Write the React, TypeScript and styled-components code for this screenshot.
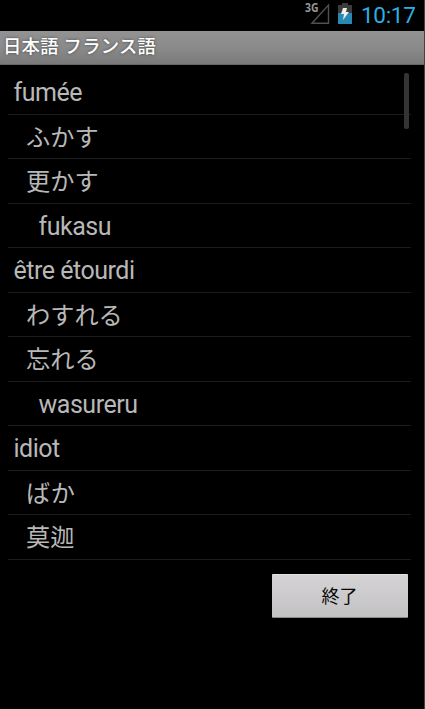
import React from "react";
import styled, { createGlobalStyle } from "styled-components";

const GlobalStyle = createGlobalStyle`
  * { box-sizing: border-box; }
  body { margin: 0; background: #000; overflow: hidden; }
`;

const Screen = styled.main`
  width: 425px;
  height: 709px;
  display: flex;
  flex-direction: column;
  background: #000;
  border-right: 1px solid #424442;
  font-family: Roboto, "Noto Sans CJK JP", sans-serif;
`;

const StatusBar = styled.header`
  height: 31px;
  display: flex;
  justify-content: flex-end;
  padding-right: 9px;
`;

const StatusIcons = styled.svg`
  width: 54px;
  height: 31px;
  margin-right: 7px;
`;

const Clock = styled.time`
  width: 54px;
  white-space: nowrap;
  color: #2eaee0;
  font-size: 22.5px;
  line-height: 30px;
  letter-spacing: -0.3px;
`;

const TitleBar = styled.h1`
  height: 34px;
  margin: 0;
  padding-left: 3px;
  background: linear-gradient(#929292, #8a8a8a 50%, #7b7a7b 96%, #5c5a5c);
  color: #fff;
  font-size: 18.3px;
  font-weight: 500;
  line-height: 31px;
  letter-spacing: 0.3px;
  text-shadow: 0 0 3px #444;
`;

const ListArea = styled.section`
  position: relative;
  height: 494.5px;
  padding: 5px 13px 0 8px;
`;

const WordList = styled.ul`
  margin: 0;
  padding: 0;
  list-style: none;
`;

const WordRow = styled.li<{ $level: number; $cjk: boolean }>`
  height: 44.5px;
  padding-left: ${({ $level }) => 5.5 + $level * 12.5}px;
  border-bottom: 1px solid #1c1c1c;
  color: #b8b8b8;
  font-size: ${({ $cjk }) => ($cjk ? 24.2 : 25)}px;
  letter-spacing: ${({ $cjk }) => ($cjk ? 0 : -0.48)}px;
  line-height: 46px;
  white-space: nowrap;
`;

const ScrollThumb = styled.div`
  position: absolute;
  top: 8px;
  right: 15px;
  width: 5px;
  height: 56px;
  border-radius: 2px;
  background: #343434;
`;

const Footer = styled.footer`
  display: flex;
  justify-content: flex-end;
  padding: 14px 16px 0 0;
`;

const ExitButton = styled.button`
  width: 136px;
  height: 44px;
  padding: 0 1px 0 0;
  border: 0;
  border-radius: 1px;
  border-top: 1px solid #e3e3e3;
  border-bottom: 1px solid #888;
  background: linear-gradient(#d5d3d5, #c3c2c3);
  color: #080808;
  font: 18px/43px Roboto, "Noto Sans CJK JP", sans-serif;
`;

const entries = [
  { text: "fumée", level: 0, cjk: false },
  { text: "ふかす", level: 1, cjk: true },
  { text: "更かす", level: 1, cjk: true },
  { text: "fukasu", level: 2, cjk: false },
  { text: "être étourdi", level: 0, cjk: false },
  { text: "わすれる", level: 1, cjk: true },
  { text: "忘れる", level: 1, cjk: true },
  { text: "wasureru", level: 2, cjk: false },
  { text: "idiot", level: 0, cjk: false },
  { text: "ばか", level: 1, cjk: true },
  { text: "莫迦", level: 1, cjk: true },
];

export default function App() {
  return (
    <>
      <GlobalStyle />
      <Screen>
        <StatusBar>
          <StatusIcons viewBox="0 0 54 31">
            <text x="5" y="12.2" fill="#959595" fontSize="11.5" fontWeight="700" fontFamily="Open Sans, sans-serif" textLength="13.5" lengthAdjust="spacingAndGlyphs">3G</text>
            <path d="M12 23.3 28.5 5v18.3Z" fill="none" stroke="#505050" strokeWidth="1.4" />
            <path d="M38 5h4V3h6v2h4v8H38Z" fill="#3c3c3c" />
            <path d="M38 13h14v11H38Z" fill="#2589b3" />
            <path d="m43 8 4 0-1 4 3 0-6 8 1-6-3 0Z" fill="#eee" />
          </StatusIcons>
          <Clock>10:17</Clock>
        </StatusBar>
        <TitleBar>日本語 フランス語</TitleBar>
        <ListArea>
          <WordList>
            {entries.map(({ text, level, cjk }) => (
              <WordRow key={text} $level={level} $cjk={cjk}>{text}</WordRow>
            ))}
          </WordList>
          <ScrollThumb />
        </ListArea>
        <Footer><ExitButton>終了</ExitButton></Footer>
      </Screen>
    </>
  );
}
